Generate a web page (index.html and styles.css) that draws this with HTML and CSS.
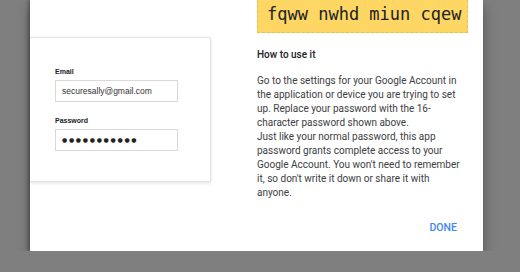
FILE: index.html
```html
<!DOCTYPE html>
<html lang="en">
  <head>
    <meta charset="UTF-8" />
    <meta name="viewport" content="width=device-width, initial-scale=1.0" />
    <title>App password</title>
    <link rel="stylesheet" href="styles.css">
  </head>
  <body>
    <div class="dialog">
      <div class="preview">
        <div class="card">
          <div class="field">
            <label>Email</label>
            <div class="input">securesally@gmail.com</div>
          </div>
          <div class="field">
            <label>Password</label>
            <div class="input dots">●●●●●●●●●●●</div>
          </div>
        </div>
      </div>

      <div class="info">
        <div class="code">fqww nwhd miun cqew</div>
        <h3>How to use it</h3>
        <p>
          Go to the settings for your Google Account in<br>
          the application or device you are trying to set<br>
          up. Replace your password with the 16-<br>
          character password shown above.<br>
          Just like your normal password, this app<br>
          password grants complete access to your<br>
          Google Account. You won't need to remember<br>
          it, so don't write it down or share it with<br>
          anyone.
        </p>
        <div class="actions">
          <button>Done</button>
        </div>
      </div>
    </div>
  </body>
</html>
```

FILE: styles.css
```css
body {
  margin: 0;
  padding: 0 0 0 30px;
  background-color: #7f7f7f;
  font-family: Roboto, Arial, sans-serif;
}

.dialog {
  display: flex;
  width: 453px;
  height: 251px;
  background-color: #fff;
  box-shadow: -2px 0 3px rgba(0, 0, 0, 0.25), 0 6px 12px rgba(0, 0, 0, 0.35);
}

.preview {
  width: 181px;
  padding-top: 37px;
}

.card {
  height: 145px;
  box-sizing: border-box;
  padding: 30px 0 0 25px;
  border: 1px solid #e4e4e4;
  border-left: none;
  box-shadow: 0 1px 3px rgba(0, 0, 0, 0.12);
}

.field {
  margin-bottom: 15px;
}

.field label {
  display: block;
  font-family: "Liberation Sans", Arial, sans-serif;
  font-size: 7px;
  font-weight: bold;
  color: #222;
  margin-bottom: 5px;
}

.input {
  width: 123px;
  height: 22px;
  box-sizing: border-box;
  padding: 0 6px;
  border: 1px solid #d9d9d9;
  font-family: "Liberation Sans", Arial, sans-serif;
  font-size: 8.5px;
  line-height: 20px;
  color: #333;
}

.dots {
  font-family: "DejaVu Sans", sans-serif;
  font-size: 6px;
  letter-spacing: 1.7px;
  color: #222;
}

.info {
  margin-left: 46px;
  width: 211px;
  display: flex;
  flex-direction: column;
}

.code {
  height: 33px;
  box-sizing: border-box;
  padding: 0 0 0 9px;
  background-color: #fdd663;
  border: 1px dashed #e8c04e;
  border-top: none;
  font-family: "DejaVu Sans Mono", monospace;
  font-size: 17px;
  line-height: 29px;
  color: #202124;
}

.info h3 {
  margin: 15px 0 0;
  font-size: 10px;
  font-weight: 500;
  line-height: 14px;
  color: #202124;
}

.info p {
  margin: 12px 0 0;
  font-size: 10px;
  line-height: 14px;
  color: #3c4043;
  white-space: nowrap;
}

.actions {
  display: flex;
  justify-content: flex-end;
  margin-top: 21px;
  padding-right: 11px;
}

.actions button {
  padding: 0;
  border: none;
  background: none;
  font-family: Roboto, Arial, sans-serif;
  font-size: 10.5px;
  font-weight: 500;
  text-transform: uppercase;
  color: #4285f4;
  cursor: pointer;
}
```
